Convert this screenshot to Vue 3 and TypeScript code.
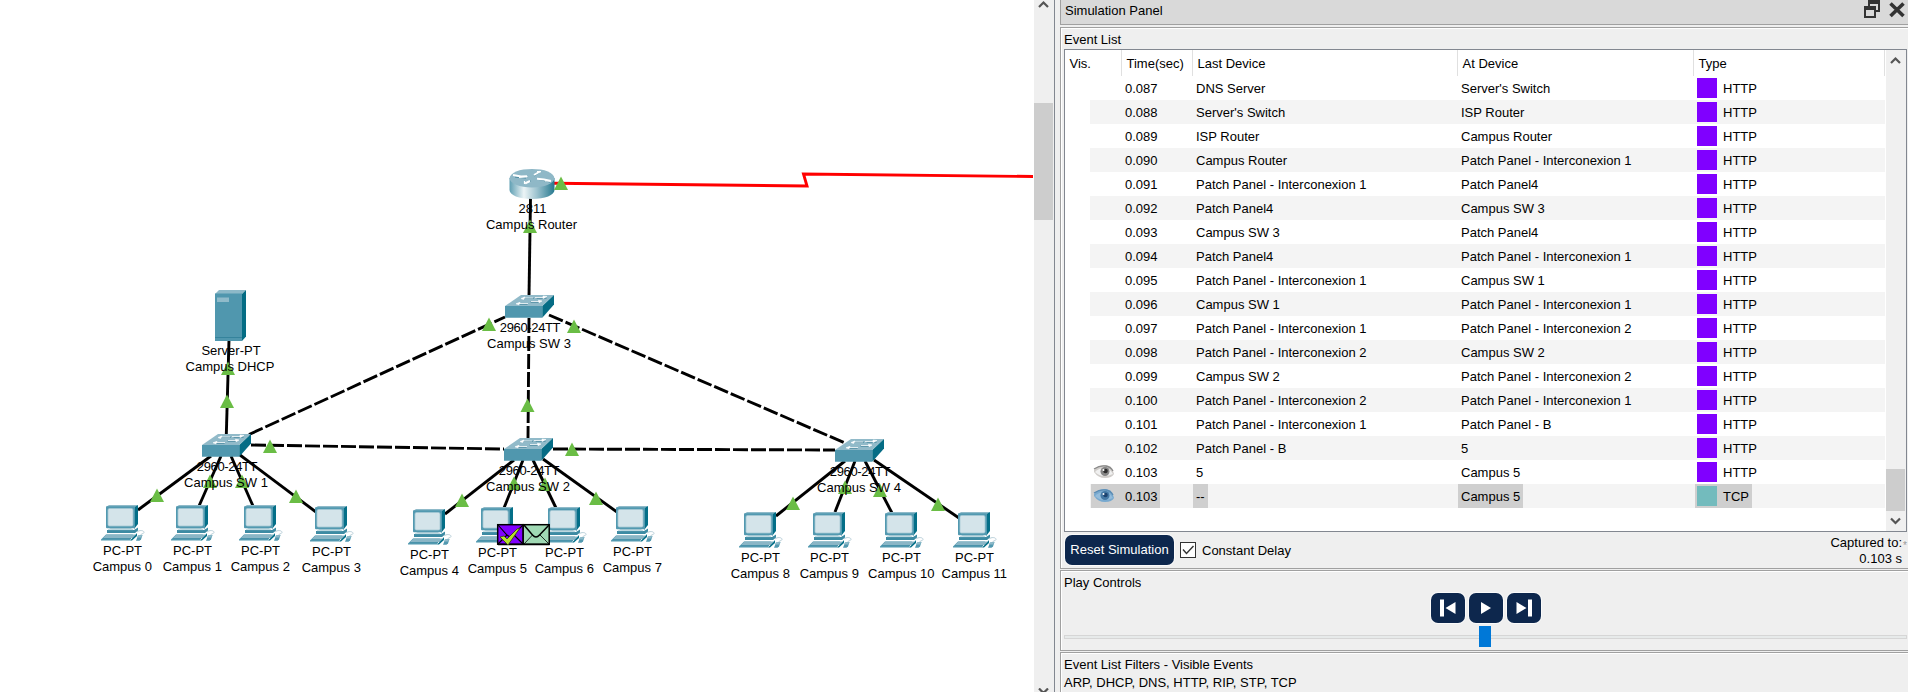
<script setup lang="ts">
interface Point { x: number; y: number }
interface Device extends Point { name: string }
interface SimEvent { time: string; last: string; at: string; type: 'HTTP' | 'TCP'; eye?: 'gray' | 'blue'; selected?: boolean }

const pcs: Device[] = [
  { x: 101, y: 505, name: 'Campus 0' },
  { x: 171, y: 505, name: 'Campus 1' },
  { x: 239, y: 505, name: 'Campus 2' },
  { x: 310, y: 506, name: 'Campus 3' },
  { x: 408, y: 509, name: 'Campus 4' },
  { x: 476, y: 507, name: 'Campus 5' },
  { x: 543, y: 507, name: 'Campus 6' },
  { x: 611, y: 506, name: 'Campus 7' },
  { x: 739, y: 512, name: 'Campus 8' },
  { x: 808, y: 512, name: 'Campus 9' },
  { x: 880, y: 512, name: 'Campus 10' },
  { x: 953, y: 512, name: 'Campus 11' },
]

const switches: Device[] = [
  { x: 202, y: 434, name: 'Campus SW 1' },
  { x: 504, y: 438, name: 'Campus SW 2' },
  { x: 505, y: 295, name: 'Campus SW 3' },
  { x: 835, y: 439, name: 'Campus SW 4' },
]

const cables: string[] = [
  'M530.5 198L529 296', 'M229 340L226.3 435',
  'M211 456L138 510', 'M221 456L199 506', 'M231 456L253 506', 'M240 455L316 512',
  'M514 460L445 514', 'M523 460L504 508', 'M533 460L556 508', 'M543 459L617 512',
  'M845 461L776 516', 'M855 461L835 512', 'M865 461L892 513', 'M874 460L959 518',
]

const trunks: string[] = [
  'M249 434.500L505 317', 'M251 445L504 449', 'M553 449L835 450', 'M549 315L845 443', 'M529 318L528 438',
]

const lights: Point[] = [
  { x: 561, y: 190 }, { x: 530, y: 233 }, { x: 489, y: 331 }, { x: 574, y: 333 },
  { x: 228, y: 375 }, { x: 227, y: 408 }, { x: 270, y: 453 }, { x: 157, y: 502 },
  { x: 210, y: 488 }, { x: 242, y: 488 }, { x: 296, y: 503 }, { x: 527.5, y: 412 },
  { x: 572, y: 456 }, { x: 462, y: 507 }, { x: 514, y: 490 }, { x: 545, y: 491 },
  { x: 596, y: 505 }, { x: 793, y: 510 }, { x: 845, y: 494 }, { x: 880, y: 497 }, { x: 938, y: 511 },
]

const panel1 = 'Patch Panel - Interconexion 1'
const panel2 = 'Patch Panel - Interconexion 2'
const events: SimEvent[] = [
  { time: '0.087', last: 'DNS Server', at: "Server's Switch", type: 'HTTP' },
  { time: '0.088', last: "Server's Switch", at: 'ISP Router', type: 'HTTP' },
  { time: '0.089', last: 'ISP Router', at: 'Campus Router', type: 'HTTP' },
  { time: '0.090', last: 'Campus Router', at: panel1, type: 'HTTP' },
  { time: '0.091', last: panel1, at: 'Patch Panel4', type: 'HTTP' },
  { time: '0.092', last: 'Patch Panel4', at: 'Campus SW 3', type: 'HTTP' },
  { time: '0.093', last: 'Campus SW 3', at: 'Patch Panel4', type: 'HTTP' },
  { time: '0.094', last: 'Patch Panel4', at: panel1, type: 'HTTP' },
  { time: '0.095', last: panel1, at: 'Campus SW 1', type: 'HTTP' },
  { time: '0.096', last: 'Campus SW 1', at: panel1, type: 'HTTP' },
  { time: '0.097', last: panel1, at: panel2, type: 'HTTP' },
  { time: '0.098', last: panel2, at: 'Campus SW 2', type: 'HTTP' },
  { time: '0.099', last: 'Campus SW 2', at: panel2, type: 'HTTP' },
  { time: '0.100', last: panel2, at: panel1, type: 'HTTP' },
  { time: '0.101', last: panel1, at: 'Patch Panel - B', type: 'HTTP' },
  { time: '0.102', last: 'Patch Panel - B', at: '5', type: 'HTTP' },
  { time: '0.103', last: '5', at: 'Campus 5', type: 'HTTP', eye: 'gray' },
  { time: '0.103', last: '--', at: 'Campus 5', type: 'TCP', eye: 'blue', selected: true },
]
</script>

<template>
  <main class="app">
    <svg class="canvas" width="1034" height="692" viewBox="0 0 1034 692">
      <defs>
        <linearGradient id="routerBody" x1="0" x2="1" y1="0" y2="0">
          <stop offset="0" stop-color="#5f9fb3" />
          <stop offset=".32" stop-color="#ecf4f6" />
          <stop offset=".6" stop-color="#9fc4d0" />
          <stop offset="1" stop-color="#27798f" />
        </linearGradient>
        <g id="pc">
          <path d="M5 2L8 0H37L34 2Z" fill="#8fbac9" />
          <path d="M33.500 2L37 0V19L33 24Z" fill="#046f88" />
          <rect x="5" y="1.300" width="29" height="22" rx="1" fill="#5299b0" />
          <rect x="7" y="3.500" width="25" height="17.500" rx="1.500" fill="#d4e4ea" stroke="#a5c8d4" stroke-width=".8" />
          <path d="M8 23.300H30L33 25.500H12Z" fill="#8fbac9" />
          <path d="M6 25H33L37 22.500V25.500L34 28H6Z" fill="#3d8ba3" />
          <path d="M7 24.600H32" stroke="#c3dbe3" />
          <path d="M5 29.500H32L29 35.500H0V34.500Z" fill="#5299b0" />
          <path d="M5.500 29.500H35L32 33H2Z" fill="#8ab6c6" />
          <path d="M34 30.500L36 28V31L31 35.500H29Z" fill="#046f88" />
          <path d="M2 33.500H30" stroke="#4a93aa" />
          <path d="M36 27C38 25 43 25 43 27.500C43 29 39 28.500 39.500 31" fill="none" stroke="#b9d0d9" />
          <path d="M37 30.500L41.500 30L40 34.500L38.500 35.700H35Z" fill="#5299b0" />
          <path d="M37 30.500L41.500 30L40 32.500H36.300Z" fill="#8fbac9" />
        </g>
        <g id="switch">
          <path d="M16 0H49L37 11H0Z" fill="#91bac9" />
          <path d="M0 11H37.300V22.700H0Z" fill="#5097ae" />
          <path d="M37.300 11L49 0V9.500L37.300 22.700Z" fill="#056c85" />
          <g transform="translate(.6 .8)" stroke="#3e8097" fill="none">
            <path d="M17 2.600H28M31 2.300H41M13 8.300H22M25 6.300H34" />
          </g>
          <g stroke="#fff" stroke-width="1.200" fill="#fff">
            <path d="M18 3H28M30 2.500H40M14 8.500H23M26 6.500H35" stroke-width=".8" />
            <path d="M16 3.500L20 2L18.500 4.500ZM42 1.500L38 1L38 3.500ZM11 8.800L15 7.300L14 9.800ZM37 6L33.500 5.200L34 7.700Z" stroke-width=".6" />
          </g>
        </g>
      </defs>

      <g fill="none" stroke="#000" stroke-width="2.900">
        <path v-for="d in cables" :key="d" :d="d" />
        <path v-for="d in trunks" :key="d" :d="d" stroke-dasharray="15 3" />
      </g>
      <path d="M554 183.300L807 186L803.500 174L1033 176.500" fill="none" stroke="#f00" stroke-width="2.900" />

      <g>
        <path d="M509.500 178V190C509.500 195 519 199 532 199S554.500 195 554.500 190V178Z" fill="url(#routerBody)" />
        <ellipse cx="532" cy="178.200" rx="22.400" ry="9.300" fill="#8fb8c7" />
        <g stroke="#3e8097" fill="none"><path d="M515 177L526 178M537 179L550 182M534 176L540 172M525 184L531 181" /></g>
        <g stroke="#fff" stroke-width="2" fill="none">
          <path d="M513 175L521 176.500L527 176.300M551 181L544 179.500L537 178.700M534 175L540 171.500M525 183.500L530 181" />
          <path d="M537 171.700H541M524.500 181V184M519 177.500L527.500 176.500M545 181H551" stroke-width="1.200" />
        </g>
      </g>

      <g>
        <path d="M215 294L219 290H246L242 294Z" fill="#8db9c8" />
        <path d="M242 294L246 290V336.500L242 341Z" fill="#046c84" />
        <path d="M215 293.500H242V341H215Z" fill="#5097ae" />
        <path d="M217 297.500H229V302H217Z" fill="#90bbca" />
        <path d="M215 337.500H242" stroke="#2f7e97" stroke-width=".8" />
      </g>

      <use v-for="s in switches" :key="s.name" href="#switch" :x="s.x" :y="s.y" />
      <use v-for="p in pcs" :key="p.name" href="#pc" :x="p.x" :y="p.y" />
      <path v-for="(l, i) in lights" :key="i" :d="`M${l.x} ${l.y - 13.500}l7 13.500h-14z`" fill="#6abd45" />

      <g class="labels">
        <text x="532.500" y="213">2811</text>
        <text x="531.500" y="229">Campus Router</text>
        <text x="231" y="355">Server-PT</text>
        <text x="230" y="371">Campus DHCP</text>
        <template v-for="s in switches" :key="s.name">
          <text class="model" :x="s.x + 25" :y="s.y + 37">2960-24TT</text>
          <text :x="s.x + 24" :y="s.y + 53">{{ s.name }}</text>
        </template>
        <template v-for="p in pcs" :key="p.name">
          <text :x="p.x + 21.500" :y="p.y + 50">PC-PT</text>
          <text :x="p.x + 21.300" :y="p.y + 66">{{ p.name }}</text>
        </template>
      </g>

      <g stroke="#000" stroke-width="1.500" fill="none">
        <rect x="497.700" y="524.700" width="25.500" height="19.500" fill="#8000ff" />
        <rect x="523.200" y="524.700" width="26" height="19.500" fill="#a0d9b4" />
        <path d="M498 544.500H549.500" />
        <path d="M498 525L507 535Q510 538 513 535L523 525M498 544L507 535M523 544L514 535" stroke-width="1.100" />
        <path d="M524 525L532.500 535Q536 539 539.500 535L549 525" stroke-width="1.500" />
        <path d="M524 544L532.500 535M549 544L540 535" stroke-width=".8" />
        <path d="M500 537L504 536L507 539L517 529L520 528L508 545Z" fill="#b5e02b" stroke="#303a10" stroke-width=".8" />
      </g>
    </svg>

    <div class="canvas-scroll">
      <svg width="19" height="10" viewBox="0 0 19 10"><path d="M5 7L9.500 2.500L14 7" /></svg>
      <div class="canvas-thumb"></div>
      <svg class="bottom" width="19" height="4" viewBox="0 0 19 4"><path d="M5 .5L9.500 5L14 .5" /></svg>
    </div>

    <aside class="panel">
      <header class="title">
        <span>Simulation Panel</span>
        <svg width="44" height="19" viewBox="0 0 44 19">
          <path d="M4 0H16V12H12V10H14V4H6V6H4Z" fill="#333" />
          <path d="M0 6H12V18H0ZM2 10V16H10V10Z" fill="#333" fill-rule="evenodd" />
          <path d="M26.500 3.500L39.500 16M39.500 3.500L26.500 16" stroke="#333" stroke-width="3.600" />
        </svg>
      </header>

      <section class="box list-box">
        <h2>Event List</h2>
        <div class="table">
          <div class="grid">
            <div class="row head">
              <span>Vis.</span><span>Time(sec)</span><span>Last Device</span><span>At Device</span><span>Type</span>
            </div>
            <div v-for="(e, i) in events" :key="i" class="row" :class="{ odd: i % 2 === 1, selected: e.selected }">
              <span class="vis">
                <svg v-if="e.eye" :class="e.eye" width="22" height="16" viewBox="0 0 22 16">
                  <path class="lid" d="M1 6Q5 1 12 1Q18 1 20 7L21 10Q19 14 12 14Q5 14 1 8Z" />
                  <path class="white" d="M2 8Q6 4 11 4Q17 4 20 10Q16 12 11 12Q6 12 2 8Z" />
                  <circle class="iris" cx="12" cy="7.500" r="4.500" />
                  <circle class="pupil" cx="12.500" cy="7" r="2.300" />
                  <circle cx="10.500" cy="6" r="1" fill="#fff" />
                  <path class="brow" d="M1 5Q7 1 13 2Q18 3 20 7" />
                </svg>
              </span>
              <span class="time"><b>{{ e.time }}</b></span>
              <span><b>{{ e.last }}</b></span>
              <span><b>{{ e.at }}</b></span>
              <span class="type"><b><i :class="e.type.toLowerCase()"></i>{{ e.type }}</b></span>
            </div>
          </div>
          <div class="list-scroll">
            <svg width="19" height="20" viewBox="0 0 19 20"><path d="M5 13L9.500 8.500L14 13" /></svg>
            <div class="list-thumb"></div>
            <svg width="19" height="20" viewBox="0 0 19 20"><path d="M5 7.500L9.500 12L14 7.500" /></svg>
          </div>
        </div>
        <div class="actions">
          <button class="reset">Reset Simulation</button>
          <span class="check"><svg width="14" height="14" viewBox="0 0 14 14"><path d="M2 6.500L5.500 10.500L12.500 3" /></svg></span>
          <span class="delay">Constant Delay</span>
          <div class="captured">Captured to:<sub>*</sub><br>0.103 s</div>
        </div>
      </section>

      <section class="box play-box">
        <h2>Play Controls</h2>
        <div class="controls">
          <button><svg width="34" height="30" viewBox="0 0 34 30"><path d="M9 6.500H13V23.500H9ZM24.500 9V21L14.500 15Z" /></svg></button>
          <button><svg width="34" height="30" viewBox="0 0 34 30"><path d="M12 9L22 15L12 21Z" /></svg></button>
          <button><svg width="34" height="30" viewBox="0 0 34 30"><path d="M21 6.500H25V23.500H21ZM9.500 9V21L19.500 15Z" /></svg></button>
        </div>
        <div class="slider"><div class="track"></div><div class="handle"></div></div>
      </section>

      <section class="box filter-box">
        <h2>Event List Filters - Visible Events</h2>
        <p>ARP, DHCP, DNS, HTTP, RIP, STP, TCP</p>
      </section>
    </aside>
  </main>
</template>

<style>
body { margin: 0; overflow: hidden; }
</style>

<style scoped>
.app {
  display: flex;
  width: 1908px;
  height: 692px;
  overflow: hidden;
  background: #efefef;
  color: #000;
  font: 13px/16px "Liberation Sans", Arial, sans-serif;
  white-space: nowrap;
}
.app * { box-sizing: border-box; }
.canvas { flex: none; background: #fff; }
.labels { font-size: 13px; text-anchor: middle; fill: #000; }
.labels .model { letter-spacing: -.35px; }
.canvas-scroll {
  display: flex;
  flex-direction: column;
  flex: none;
  width: 21px;
  border-right: 1px solid #828790;
}
.canvas-scroll svg { flex: none; }
.canvas-scroll path, .list-scroll path { fill: none; stroke: #555; stroke-width: 2.200; }
.canvas-thumb { flex: none; width: 19px; height: 117px; margin-top: 93px; background: #cdcdcd; }
.bottom { margin-top: auto; }
.panel {
  display: flex;
  flex-direction: column;
  flex: none;
  width: 848px;
  margin-left: 5px;
}
.title {
  display: flex;
  flex: none;
  justify-content: space-between;
  height: 25px;
  padding-left: 4px;
  border-left: 1px solid #a0a0a0;
  border-bottom: 1px solid #a0a0a0;
  background: #d9d9d9;
}
.title span { padding-top: 3px; }
.box {
  flex: none;
  border: solid #a0a0a0;
  border-width: 1px 0 1px 1px;
  box-shadow: inset 1px 1px #fff;
}
h2, p { margin: 0; font-size: 13px; font-weight: 400; line-height: 16px; }
.list-box { height: 542px; margin-top: 2px; padding: 4px 1px 0 3px; }
.table {
  display: flex;
  height: 483px;
  margin-top: 1px;
  border: 1px solid #828790;
  background: #fff;
}
.grid { width: 820px; }
.row {
  display: grid;
  grid-template-columns: 57px 71px 265px 236px 191px;
  grid-template-rows: 24px;
  height: 24px;
  line-height: 25px;
}
.head { grid-template-rows: 26px; height: 26px; line-height: 27px; }
.head span { padding-left: 4.5px; border-right: 1px solid #e0e0e0; }
.odd { background: linear-gradient(90deg, #fff 25px, #f4f4f4 25px); }
.row b { display: block; width: fit-content; height: 24px; padding: 0 3px; font-weight: 400; }
.row .time { margin-left: -4px; }
.row .time b { padding: 0 2px 0 7px; }
.vis { display: flex; padding-left: 28px; align-items: center; }
.type { padding-left: 1px; }
.row .type b { display: flex; align-items: center; padding-left: 2px; }
.type i { width: 20px; height: 20px; margin-right: 6px; }
.http { background: #8000ff; }
.tcp { background: #73bbbd; }
.selected b { background: #cfcfcf; }
.selected .vis { background: linear-gradient(90deg, transparent 26px, #cfcfcf 26px); }
.gray .lid { fill: #d0cdca; }
.gray .white { fill: #f0f0f0; }
.gray .iris { fill: #858585; }
.gray .pupil { fill: #2c2c2c; }
.gray .brow { fill: none; stroke: #8a8a8a; stroke-width: 1.300; }
.blue .lid { fill: #78a9cf; }
.blue .white { fill: #94bcdb; }
.blue .iris { fill: #467aa6; }
.blue .pupil { fill: #1d4470; }
.blue .brow { fill: none; stroke: #5a8bb3; stroke-width: 1.300; }
.list-scroll {
  display: flex;
  flex-direction: column;
  width: 20px;
  margin-left: 1px;
  background: #f0f0f0;
}
.list-thumb { width: 19px; height: 42px; margin-top: auto; background: #cdcdcd; }
.actions { display: flex; padding-top: 3px; }
button { border: 0; padding: 0; font: inherit; }
.reset {
  width: 109px;
  height: 30px;
  margin-left: 1px;
  border-radius: 7px;
  background: #0d274d;
  box-shadow: 0 0 0 1px #fafafa;
  color: #fff;
}
.check { width: 16px; height: 16px; margin: 7px 0 0 6px; border: 1px solid #333; background: #fff; }
.check svg { display: block; }
.check path { fill: none; stroke: #333; stroke-width: 1.400; }
.delay { margin: 8px 0 0 6px; }
.captured { position: relative; margin: 0 5px 0 auto; text-align: right; }
.captured sub { position: absolute; right: -5px; top: 5px; color: #999; font-size: 10px; line-height: 12px; }
.play-box { height: 81px; margin-top: 1px; padding: 4px 1px 0 3px; }
.controls { display: flex; gap: 4px; margin: 2px 0 0 367px; }
.controls button { width: 34px; height: 30px; border-radius: 7px; background: #0d274d; box-shadow: 0 0 0 1px #fafafa; }
.controls svg { display: block; }
.controls path { fill: #fff; }
.slider { display: flex; align-items: center; height: 21px; margin-top: 3px; }
.track { width: 843px; height: 4px; border: 1px solid #d6d6d6; background: #e7eaea; }
.handle { flex: none; width: 12px; height: 21px; margin-left: -428px; background: #0078d7; }
.filter-box { height: 60px; margin-top: 1px; padding: 4px 0 0 3px; }
.filter-box p { margin-top: 2px; }
</style>
